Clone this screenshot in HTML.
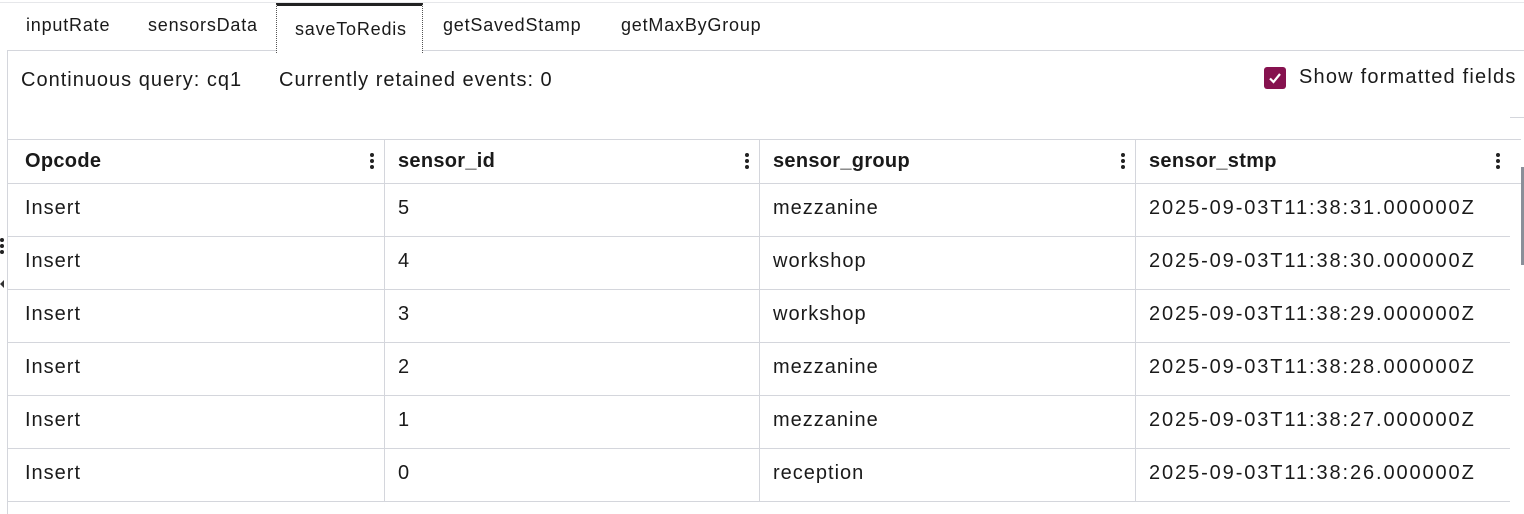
<!DOCTYPE html>
<html><head><style>
body{margin:0;width:1524px;height:514px;background:#fff;font-family:"Liberation Sans",sans-serif;color:#1a1a1a;position:relative;overflow:hidden}
.a{position:absolute;white-space:nowrap}
.tab{font-size:18px;top:15px;letter-spacing:0.8px}
.h{font-size:20px;font-weight:bold;top:150px;letter-spacing:0.3px}
.c{font-size:20px;letter-spacing:1px}
.ts{letter-spacing:1.9px}
.hl{position:absolute;height:1px;background:#d4d6dc}
.vl{position:absolute;width:1px;background:#d4d6dc}
.dots{position:absolute;width:4px}
.dots i{display:block;width:4px;height:4px;background:#222;border-radius:50%;margin-bottom:2px}
</style></head><body>
<div class="hl" style="left:0;top:2px;width:1524px;background:#e6e7ea"></div>
<div class="vl" style="left:7px;top:50px;height:464px"></div>
<div class="hl" style="left:7px;top:50px;width:1517px"></div>
<div class="a" style="left:276px;top:3px;width:145px;height:47px;background:#fff;border:1px dotted #555;border-top:3px solid #222;border-bottom:none"></div>
<div class="a tab" style="left:26px">inputRate</div>
<div class="a tab" style="left:148px">sensorsData</div>
<div class="a tab" style="left:295px;top:19px">saveToRedis</div>
<div class="a tab" style="left:443px">getSavedStamp</div>
<div class="a tab" style="left:621px">getMaxByGroup</div>
<div class="a c" style="left:21px;top:69px">Continuous query: cq1</div>
<div class="a c" style="left:279px;top:69px">Currently retained events: 0</div>
<div class="a" style="left:1264px;top:67px;width:22px;height:22px;background:#86124f;border-radius:3px"><svg width="22" height="22"><path d="M6 11.5l3.5 3.5 6.5-8" fill="none" stroke="#fff" stroke-width="2.2"/></svg></div>
<div class="a c" style="left:1299px;top:66px;letter-spacing:1.2px">Show formatted fields</div>
<div class="hl" style="left:1510px;top:117px;width:14px"></div>
<div class="hl" style="left:8px;top:139px;width:1513px"></div>
<div class="hl" style="left:8px;top:183px;width:1513px"></div>
<div class="vl" style="left:384px;top:139px;height:362px"></div>
<div class="vl" style="left:759px;top:139px;height:362px"></div>
<div class="vl" style="left:1135px;top:139px;height:362px"></div>
<div class="a h" style="left:25px">Opcode</div>
<div class="a h" style="left:398px">sensor_id</div>
<div class="a h" style="left:773px">sensor_group</div>
<div class="a h" style="left:1149px">sensor_stmp</div>
<div class="dots" style="left:370px;top:153px"><i></i><i></i><i></i></div>
<div class="dots" style="left:745px;top:153px"><i></i><i></i><i></i></div>
<div class="dots" style="left:1121px;top:153px"><i></i><i></i><i></i></div>
<div class="dots" style="left:1496px;top:153px"><i></i><i></i><i></i></div>
<div class="a" style="left:1521px;top:167px;width:3px;height:98px;background:#8a8f99"></div>
<div class="dots" style="left:0;top:238px"><i></i><i></i><i></i></div>
<div class="a" style="left:0;top:280px;width:0;height:0;border-top:4px solid transparent;border-bottom:4px solid transparent;border-right:4px solid #333"></div>
<div id="rows"></div>
<script>
var d=[["5","mezzanine","31"],["4","workshop","30"],["3","workshop","29"],["2","mezzanine","28"],["1","mezzanine","27"],["0","reception","26"]],h="";
d.forEach(function(r,i){var t=183+i*53+14;
h+='<div class="a c" style="left:25px;top:'+t+'px">Insert</div><div class="a c" style="left:398px;top:'+t+'px">'+r[0]+'</div><div class="a c" style="left:773px;top:'+t+'px">'+r[1]+'</div><div class="a c ts" style="left:1149px;top:'+t+'px">2025-09-03T11:38:'+r[2]+'.000000Z</div><div class="hl" style="left:8px;top:'+(t+39)+'px;width:1502px"></div>';});
document.getElementById("rows").innerHTML=h;
</script>
</body></html>
